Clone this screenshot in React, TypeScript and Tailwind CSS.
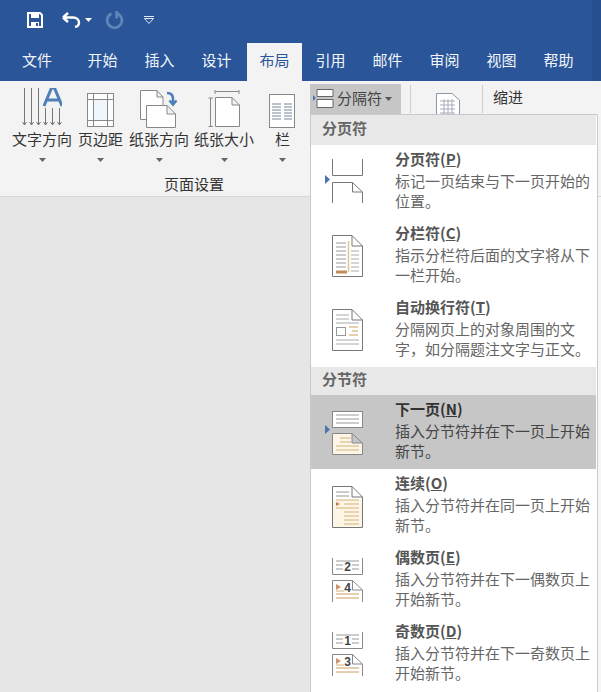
import React from "react";

const font = { fontFamily: '"Noto Sans CJK SC", "Noto Sans", sans-serif' };

const tabs = ["文件", "开始", "插入", "设计", "布局", "引用", "邮件", "审阅", "视图", "帮助"];

const Caret = ({ className = "" }: { className?: string }) => (
  <svg width="7" height="4" viewBox="0 0 7 4" className={className}>
    <path d="M0 0h7L3.5 4z" fill="currentColor" />
  </svg>
);

const Pointer = () => (
  <svg width="5" height="9" viewBox="0 0 5 9" className="absolute left-[14px] top-[30px]">
    <path d="M0 0l5 4.5L0 9z" fill="#4a76b0" />
  </svg>
);

const lines = (x1: number, x2: number, ys: number[], stroke: string) =>
  ys.map((y) => <path key={y} d={`M${x1} ${y}H${x2}`} stroke={stroke} strokeWidth="1" />);

const Page = ({ fill = "#fff" }: { fill?: string }) => (
  <path d="M.5.5H20L30.5 11V41.5H.5z M20 .5V11H30.5" fill={fill} stroke="#777" strokeWidth="1" />
);

const PageBreakIcon = () => (
  <svg width="31" height="44" viewBox="0 0 31 44" fill="none" stroke="#777">
    <path d="M.5 0V16.5H30.5V0" />
    <path d="M.5 44V23.5H20.5L30.5 33V44M20.5 23.5V33H30.5" />
  </svg>
);

const ColumnIcon = () => (
  <svg width="31" height="42" viewBox="0 0 31 42" fill="none">
    <Page />
    {lines(4, 14, [8, 12, 16, 20, 24, 28, 32], "#999")}
    {lines(19, 27, [16, 20, 24, 28, 32, 36], "#aaa")}
    <path d="M16.5 6V37" stroke="#e6c48e" strokeWidth="1.5" />
    <path d="M4 37H15" stroke="#c08a5a" strokeWidth="3" />
  </svg>
);

const WrapIcon = () => (
  <svg width="31" height="42" viewBox="0 0 31 42" fill="none">
    <Page />
    {lines(4, 17, [6, 10], "#aaa")}
    {lines(4, 27, [14, 31, 35], "#aaa")}
    <rect x="4.5" y="18.5" width="9" height="8" stroke="#999" />
    <path d="M17 18H26M20 22H26M17 26H26" stroke="#c9a060" />
  </svg>
);

const NextPageIcon = () => (
  <svg width="31" height="44" viewBox="0 0 31 44" fill="none">
    <rect x=".5" y=".5" width="30" height="16" fill="#fff" stroke="#888" />
    {lines(4, 27, [4, 8, 12], "#999")}
    <path d="M.5 22.5H20L30.5 32V43.5H.5z M20 22.5V32H30.5" fill="#fdf6e6" stroke="#888" />
    {lines(8, 19, [27, 31], "#d6b27a")}
    {lines(4, 27, [35, 39], "#d6b27a")}
  </svg>
);

const ContinuousIcon = () => (
  <svg width="31" height="42" viewBox="0 0 31 42" fill="none">
    <path d="M.5.5H20L30.5 11V41.5H.5z" fill="#fff" />
    <rect x="1" y="14" width="29" height="27" fill="#fdf6e6" />
    <path d="M.5.5H20L30.5 11V41.5H.5z M20 .5V11H30.5" stroke="#777" />
    {lines(4, 17, [6, 10], "#999")}
    {lines(12, 27, [18, 26, 30, 34, 38], "#d6b27a")}
    {lines(4, 27, [14, 22], "#d6b27a")}
    <path d="M4 16l4 2-4 2z" fill="#c08050" />
  </svg>
);

const OddEvenIcon = ({ top, bottom }: { top: string; bottom: string }) => (
  <svg width="31" height="44" viewBox="0 0 31 44" fill="none">
    <path d="M.5 0V16.5H30.5V0" stroke="#888" />
    {lines(4, 27, [3], "#999")}
    {lines(4, 11, [7, 11], "#999")}
    {lines(20, 27, [7, 11], "#999")}
    <text x="15.5" y="13" textAnchor="middle" fontSize="12" fontWeight="700" fill="#444" style={{ fontFamily: '"Liberation Sans", sans-serif' }}>
      {top}
    </text>
    <path d="M.5 44V22.5H20.5L30.5 32V44M20.5 22.5V32H30.5" stroke="#888" />
    <path d="M4 26l5 3-5 3z" fill="#d0906a" />
    {lines(4, 12, [33], "#d6b27a")}
    {lines(4, 27, [36, 40], "#c9a060")}
    <text x="15.5" y="34" textAnchor="middle" fontSize="12" fontWeight="700" fill="#444" style={{ fontFamily: '"Liberation Sans", sans-serif' }}>
      {bottom}
    </text>
  </svg>
);

const menu = [
  { head: "分页符" },
  { title: "分页符", key: "P", desc: "标记一页结束与下一页开始的位置。", icon: <PageBreakIcon />, pointer: true, top: "pt-[14px]" },
  { title: "分栏符", key: "C", desc: "指示分栏符后面的文字将从下一栏开始。", icon: <ColumnIcon />, top: "pt-[16px]" },
  { title: "自动换行符", key: "T", desc: "分隔网页上的对象周围的文字，如分隔题注文字与正文。", icon: <WrapIcon />, top: "pt-[16px]" },
  { head: "分节符" },
  { title: "下一页", key: "N", desc: "插入分节符并在下一页上开始新节。", icon: <NextPageIcon />, pointer: true, active: true, top: "pt-[16px]" },
  { title: "连续", key: "O", desc: "插入分节符并在同一页上开始新节。", icon: <ContinuousIcon />, top: "pt-[17px]" },
  { title: "偶数页", key: "E", desc: "插入分节符并在下一偶数页上开始新节。", icon: <OddEvenIcon top="2" bottom="4" />, top: "pt-[15px]" },
  { title: "奇数页", key: "D", desc: "插入分节符并在下一奇数页上开始新节。", icon: <OddEvenIcon top="1" bottom="3" />, top: "pt-[15px]" },
];

const ribbonItems = [
  {
    label: "文字方向",
    width: "w-[60px]",
    icon: (
      <svg width="40" height="40" viewBox="0 0 40 40" fill="none">
        <g stroke="#777">
          {[3, 10, 17, 24, 31, 38].map((x, i) => (
            <path key={x} d={`M${x - 0.5} ${i < 3 ? 0 : 20}V37M${x - 2.5} 34l2 3 2-3`} />
          ))}
        </g>
        <path d="M22 18L29.5 0h3L40 18M25 12H37" stroke="#4d7fb8" strokeWidth="3" />
      </svg>
    ),
  },
  {
    label: "页边距",
    width: "w-[45px] ml-[6px]",
    icon: (
      <svg width="27" height="35" viewBox="0 0 27 35" fill="none" stroke="#888">
        <rect x=".5" y=".5" width="26" height="33" fill="#fbfdff" />
        <rect x="6.5" y="6.5" width="14" height="21" fill="#f0f6fb" />
        <path d="M6.5 0V34M20.5 0V34M0 6.5H27M0 27.5H27" />
      </svg>
    ),
  },
  {
    label: "纸张方向",
    width: "w-[60px] ml-[6px]",
    icon: (
      <svg width="38" height="38" viewBox="0 0 38 38" fill="none">
        <path d="M.5 29.5V.5H17L23 7V29.5z M17 .5V7H23" stroke="#888" fill="#fff" />
        <path d="M6.5 37.5V15.5H27L35.5 24V37.5z M27 15.5V24H35.5" stroke="#888" fill="#fff" />
        <path d="M27 3C31 3 33 5 33 9V13M29.5 10.5L33 14.5L36.5 10.5" stroke="#4d7fb8" strokeWidth="2.5" />
      </svg>
    ),
  },
  {
    label: "纸张大小",
    width: "w-[60px] ml-[5px]",
    icon: (
      <svg width="32" height="38" viewBox="0 0 32 38" fill="none" stroke="#888">
        <path d="M7 1.5H31M7 0V4M31 0V4M2.5 8V37M.5 8H5M.5 36.5H5" />
        <path d="M7.5 7.5H24L31.5 15V36.5H7.5z M24 7.5V15H31.5" fill="#fff" />
      </svg>
    ),
  },
  {
    label: "栏",
    width: "w-[25px] ml-[16px]",
    icon: (
      <svg width="27" height="34" viewBox="0 0 27 34" fill="none">
        <rect x=".5" y=".5" width="25" height="33" fill="#fff" stroke="#888" />
        {lines(3, 12, [10, 13, 16, 19, 22, 25], "#789")}
        {lines(15, 23, [10, 13, 16, 19, 22, 25], "#789")}
      </svg>
    ),
  },
];

export default function App() {
  return (
    <div className="relative w-[601px] h-[692px] overflow-hidden bg-[#e6e6e6]" style={font}>
      {/* title bar */}
      <div className="h-[43px] bg-[#2a5699] flex items-center pl-[27px] pb-[4px]">
        <svg width="16" height="16" viewBox="0 0 16 16" fill="none">
          <path d="M1 1H13L15 3V15H1z" stroke="#fff" strokeWidth="2" />
          <path d="M4 1.5H12V6H4z" fill="#fff" />
          <path d="M4 10H12V15H4z" fill="#fff" />
          <path d="M9 11H11V14H9z" fill="#2a5699" />
        </svg>
        <svg width="19" height="16" viewBox="0 0 19 16" fill="none" className="ml-[19px]">
          <path d="M1 5.5L6 1M1 5.5L6 10M1.5 5.5H11C15 5.5 17 8 17 10.5C17 13 15.5 14.5 13 15" stroke="#fff" strokeWidth="2.4" />
        </svg>
        <Caret className="text-white ml-[4px]" />
        <svg width="19" height="19" viewBox="0 0 18 18" fill="none" className="ml-[13px]">
          <path d="M6 3.5A7 7 0 1 0 12 3.5M11 1V8" stroke="#5f86b9" strokeWidth="2.6" />
        </svg>
        <svg width="12" height="9" viewBox="0 0 12 9" fill="none" className="ml-[19px] mt-[2px]">
          <path d="M1 .5H11M1.5 2.5H10.5L6 7.5z" stroke="#dfe7f2" />
        </svg>
      </div>

      {/* tabs */}
      <div className="h-[38px] bg-[#2a5699] flex items-end relative">
        {tabs.map((t, i) => (
          <div
            key={t}
            className={`h-[38px] shrink-0 flex items-center justify-center pb-[3px] text-[15px] ${
              t === "布局" ? "bg-[#f3f3f3] text-[#2a5699] ml-[2px] w-[55px]" : "text-[#f2f5fa] w-[57px]"
            } ${i === 0 ? "w-[74px]" : ""}`}
          >
            {t}
          </div>
        ))}
      </div>

      {/* darker edge of the window */}
      <div className="absolute right-0 top-0 w-[9px] h-[81px] bg-[#27508f]" />

      {/* ribbon */}
      <div className="h-[116px] bg-[#f3f3f3] border-b border-[#d6d6d6] relative">
        <div className="flex pl-[12px] pt-[6px] items-start">
          {ribbonItems.map((it) => (
            <div key={it.label} className={`${it.width} shrink-0 flex flex-col items-center`}>
              <div className="h-[41px] flex items-end justify-center">{it.icon}</div>
              <div className="text-[15px] leading-[22px] text-[#333] whitespace-nowrap">{it.label}</div>
              <Caret className="text-[#666] mt-[8px]" />
            </div>
          ))}
        </div>
        <div className="absolute left-[164px] top-[93px] text-[15px] leading-[20px] text-[#333]">页面设置</div>
        <div className="absolute left-[310px] top-[3px] h-[30px] w-[91px] bg-[#c6c6c6] flex items-center pl-[3px]">
          <svg width="21" height="20" viewBox="0 0 21 20" fill="none">
            <path d="M4 7.5V.5H20V7.5zM4 18.5V10.5H20V18.5z" fill="#fff" stroke="#666" />
            <path d="M0 6l3 3-3 3z" fill="#4a76b0" />
          </svg>
          <span className="ml-[3px] mb-[2px] text-[15px] text-[#444] leading-[20px]">分隔符</span>
          <Caret className="text-[#555] ml-[3px]" />
        </div>
        <div className="absolute left-[410px] top-[4px] w-px h-[28px] bg-[#cfcfcf]" />
        <div className="absolute left-[482px] top-[4px] w-px h-[28px] bg-[#cfcfcf]" />
        <svg width="24" height="24" viewBox="0 0 24 24" className="absolute left-[436px] top-[12px]" fill="none">
          <path d="M.5 24V.5H16L23.5 7V24" fill="#fff" stroke="#8a97a8" />
          <path d="M4 8H19M4 12H19M4 16H19M4 20H19M8 6V24M12 6V24M16 6V24" stroke="#aab" />
        </svg>
        <div className="absolute left-[493px] top-[6px] text-[15px] leading-[20px] text-[#333]">缩进</div>
      </div>

      {/* strip right of the menu */}
      <div className="absolute right-0 top-[197px] bottom-0 w-[3px] bg-[#f6f6f6]" />

      {/* dropdown menu */}
      <div className="absolute left-[310px] top-[114px] right-[3px] bottom-0 bg-white border-l border-t border-r border-[#c9c9c9] pr-[1px]">
        {menu.map((m, i) =>
          m.head ? (
            <div
              key={i}
              className={`${i === 0 ? "h-[30px]" : "h-[28px]"} bg-[#e8e8e8] pl-[11px] pb-[3px] flex items-center text-[15px] font-bold text-[#666]`}
            >
              {m.head}
            </div>
          ) : (
            <div key={i} className={`relative h-[74px] flex ${m.active ? "bg-[#c6c6c6]" : "bg-white"}`}>
              {m.pointer && <Pointer />}
              <div className={`w-[84px] shrink-0 pl-[21px] ${m.top}`}>{m.icon}</div>
              <div className="w-[197px] pt-[4px] text-[15px] leading-[20.5px]">
                <div className={`font-bold mb-[1px] ${m.active ? "text-[#333]" : "text-[#555]"}`}>
                  {m.title}(<span className="underline">{m.key}</span>)
                </div>
                <div className={m.active ? "text-[#444]" : "text-[#666]"}>{m.desc}</div>
              </div>
            </div>
          ),
        )}
      </div>
    </div>
  );
}
